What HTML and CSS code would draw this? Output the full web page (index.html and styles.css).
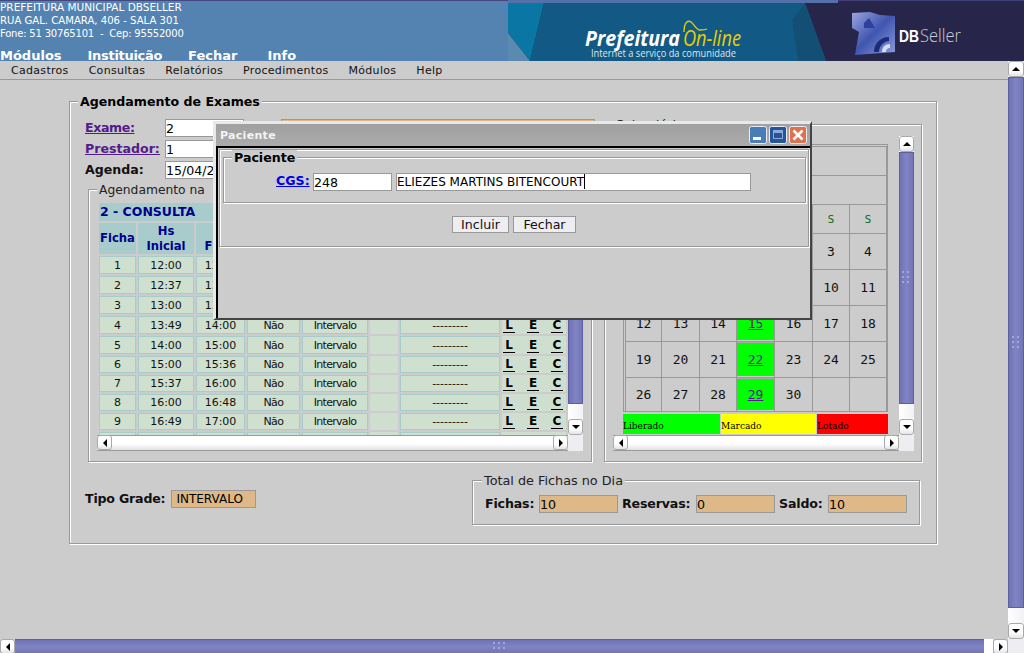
FILE: index.html
```html
<!DOCTYPE html>
<html lang="pt-BR">
<head>
<meta charset="utf-8">
<title>Agendamento de Exames</title>
<link rel="stylesheet" href="styles.css">
</head>
<body>
<div class="app">
  <header class="top">
    <div class="inst">
      <div class="inst-lines">
        <div class="l1">PREFEITURA MUNICIPAL DBSELLER</div>
        <div class="l2">RUA GAL. CAMARA, 406 - SALA 301</div>
        <div class="l3">Fone: 51 30765101 &nbsp;- &nbsp;Cep: 95552000</div>
      </div>
      <nav class="topnav"><span>Módulos</span><span class="n-inst">Instituição</span><span>Fechar</span><span class="n-info">Info</span></nav>
    </div>
    <svg class="banner" width="516" height="61" viewBox="0 0 516 61">
      <defs>
        <linearGradient id="cube" x1="0" y1="0" x2="1" y2="1">
          <stop offset="0" stop-color="#9aa6df"/><stop offset=".5" stop-color="#3f56b0"/><stop offset="1" stop-color="#8c9bd8"/>
        </linearGradient>
      </defs>
      <rect width="516" height="61" fill="#27264a"/>
      <path d="M0 3H36L22 61H22L0 33Z" fill="#0a76a4"/>
      <path d="M36 3H297L318 61H22Z" fill="#125a85"/>
      <path d="M284 20L297 3L318 61H290Z" fill="#134f74"/>
      <path d="M0 33L22 61H0Z" fill="#5a8ab0"/>
      <rect width="330" height="3" fill="#5470a8"/>
      <rect x="330" width="186" height="1" fill="#3f3f78"/>
      <text class="b-pref" x="77" y="46" textLength="95" lengthAdjust="spacingAndGlyphs">Prefeitura</text>
      <text class="b-on" x="175" y="46" textLength="58" lengthAdjust="spacingAndGlyphs">On-line</text>
      <path d="M176 32C176 22 180 20 183 22C187 25 188 30 192 30C195 30 197 30 199 29" fill="none" stroke="#e8cf00" stroke-width="1.3"/>
      <text class="b-sub" x="83" y="57" textLength="145" lengthAdjust="spacingAndGlyphs">Internet a serviço da comunidade</text>
      <path d="M344 13L362 12L372 15L387 16L387 52L347 55L351 32L344 28Z" fill="url(#cube)"/>
      <path d="M356 23L361 18L367 28L356 28Z" fill="#2e3f9c"/>
      <path d="M366 52C366 44 372 37 381 37L381 41C376 41 371 46 371 52Z" fill="#1c2c7c"/>
      <path d="M374 52C374 47 377 44 382 44L382 48C379 48 378 50 378 52Z" fill="#d5dcf2"/>
      <text class="b-db" x="391" y="42" textLength="20" lengthAdjust="spacingAndGlyphs">DB</text>
      <text class="b-seller" x="412" y="42" textLength="41" lengthAdjust="spacingAndGlyphs">Seller</text>
    </svg>
  </header>

  <div class="workspace">
    <nav class="menubar"><span>Cadastros</span><span>Consultas</span><span>Relatórios</span><span>Procedimentos</span><span>Módulos</span><span>Help</span></nav>

    <section class="group main-group">
      <div class="legend legend-strong">Agendamento de Exames</div>
      <div class="main-top">
        <div class="left-col">
          <div class="form-row"><a class="lbl lbl-link l-exame" href="#">Exame:</a><div class="field f-code">2</div><div class="field f-desc orange"></div></div>
          <div class="form-row"><a class="lbl lbl-link" href="#">Prestador:</a><div class="field f-code">1</div></div>
          <div class="form-row"><span class="lbl">Agenda:</span><div class="field f-code">15/04/2009</div></div>

          <section class="group slots-group">
            <div class="legend legend-tight">Agendamento na &nbsp;Data</div>
            <div class="scrollpanel slots-panel">
              <div class="viewport">
                <table class="slots">
                  <colgroup><col class="c1"><col class="c2"><col class="c3"><col class="c4"><col class="c5"><col class="c6"><col class="c7"><col class="c8"></colgroup>
                  <tr class="h-title"><th colspan="8">2 - CONSULTA</th></tr>
                  <tr class="h-cols"><th>Ficha</th><th>Hs<br>Inicial</th><th>Hs<br>Final</th><th></th><th></th><th></th><th></th><th></th></tr>
                  <tr class="tall"><td>1</td><td>12:00</td><td>12:36</td><td>Não</td><td>Intervalo</td><td class="plain"></td><td>---------</td><td class="plain"><div class="acts"><a>L</a><a>E</a><a>C</a></div></td></tr>
                  <tr class="tall"><td>2</td><td>12:37</td><td>13:00</td><td>Não</td><td>Intervalo</td><td class="plain"></td><td>---------</td><td class="plain"><div class="acts"><a>L</a><a>E</a><a>C</a></div></td></tr>
                  <tr class="tall"><td>3</td><td>13:00</td><td>13:48</td><td>Não</td><td>Intervalo</td><td class="plain"></td><td>---------</td><td class="plain"><div class="acts"><a>L</a><a>E</a><a>C</a></div></td></tr>
                  <tr class="tall"><td>4</td><td>13:49</td><td>14:00</td><td>Não</td><td>Intervalo</td><td class="plain"></td><td>---------</td><td class="plain"><div class="acts"><a>L</a><a>E</a><a>C</a></div></td></tr>
                  <tr class="tall"><td>5</td><td>14:00</td><td>15:00</td><td>Não</td><td>Intervalo</td><td class="plain"></td><td>---------</td><td class="plain"><div class="acts"><a>L</a><a>E</a><a>C</a></div></td></tr>
                  <tr><td>6</td><td>15:00</td><td>15:36</td><td>Não</td><td>Intervalo</td><td class="plain"></td><td>---------</td><td class="plain"><div class="acts"><a>L</a><a>E</a><a>C</a></div></td></tr>
                  <tr><td>7</td><td>15:37</td><td>16:00</td><td>Não</td><td>Intervalo</td><td class="plain"></td><td>---------</td><td class="plain"><div class="acts"><a>L</a><a>E</a><a>C</a></div></td></tr>
                  <tr><td>8</td><td>16:00</td><td>16:48</td><td>Não</td><td>Intervalo</td><td class="plain"></td><td>---------</td><td class="plain"><div class="acts"><a>L</a><a>E</a><a>C</a></div></td></tr>
                  <tr><td>9</td><td>16:49</td><td>17:00</td><td>Não</td><td>Intervalo</td><td class="plain"></td><td>---------</td><td class="plain"><div class="acts"><a>L</a><a>E</a><a>C</a></div></td></tr>
                  <tr><td></td><td></td><td></td><td></td><td></td><td class="plain"></td><td></td><td class="plain"></td></tr>
                </table>
              </div>
              <div class="vbar"><div class="sbtn up"></div><div class="thumb"></div><div class="track"></div><div class="sbtn down"></div></div>
              <div class="hbar"><div class="sbtn left"></div><div class="htrack"></div><div class="sbtn right"></div></div>
              <div class="corner"></div>
            </div>
          </section>
        </div>

        <section class="group cal-group">
          <div class="legend">Calendário</div>
          <div class="scrollpanel cal-panel">
            <div class="viewport cal-view">
              <div class="cal-frame">
                <table class="cal">
                  <colgroup><col class="d1"><col class="d2"><col class="d3"><col class="d4"><col class="d5"><col class="d6"><col class="d7"></colgroup>
                  <tr class="r-a"><td colspan="7"></td></tr>
                  <tr class="r-b"><td colspan="7"></td></tr>
                  <tr class="r-b wk"><td>D</td><td>S</td><td>T</td><td>Q</td><td>Q</td><td>S</td><td>S</td></tr>
                  <tr class="r-w"><td></td><td></td><td></td><td class="on"><a href="#">1</a></td><td>2</td><td>3</td><td>4</td></tr>
                  <tr class="r-w"><td>5</td><td>6</td><td>7</td><td class="on"><a href="#">8</a></td><td>9</td><td>10</td><td>11</td></tr>
                  <tr class="r-w"><td>12</td><td>13</td><td>14</td><td class="on"><a href="#">15</a></td><td>16</td><td>17</td><td>18</td></tr>
                  <tr class="r-w"><td>19</td><td>20</td><td>21</td><td class="on"><a href="#">22</a></td><td>23</td><td>24</td><td>25</td></tr>
                  <tr class="r-l"><td>26</td><td>27</td><td>28</td><td class="on"><a href="#">29</a></td><td>30</td><td></td><td></td></tr>
                </table>
              </div>
              <div class="cal-key"><span class="k-lib">Liberado</span><span class="k-mar">Marcado</span><span class="k-lot">Lotado</span></div>
            </div>
            <div class="vbar"><div class="sbtn up"></div><div class="thumb"><i class="grip"></i></div><div class="track"></div><div class="sbtn down"></div></div>
            <div class="hbar"><div class="sbtn left"></div><div class="htrack"></div><div class="sbtn right"></div></div>
            <div class="corner"></div>
          </div>
        </section>
      </div>

      <div class="main-bottom">
        <div class="tipo"><span class="lbl">Tipo Grade:</span><div class="field orange f-tipo">INTERVALO</div></div>
        <section class="group total-group">
          <div class="legend">Total de Fichas no Dia</div>
          <div class="totals">
            <span class="lbl">Fichas:</span><div class="field orange f-total">10</div>
            <span class="lbl">Reservas:</span><div class="field orange f-total">0</div>
            <span class="lbl">Saldo:</span><div class="field orange f-total">10</div>
          </div>
        </section>
      </div>
    </section>
  </div>

  <div class="vbar page-v"><div class="sbtn up"></div><div class="thumb"><i class="grip"></i></div><div class="track"></div><div class="sbtn down"></div></div>
  <div class="page-h"><div class="sbtn left"></div><div class="hthumb"><i class="grip grip-h"></i></div><div class="htrack"></div><div class="sbtn right"></div></div>
  <div class="page-corner"></div>
</div>

<div class="dialog">
  <div class="titlebar">
    <span class="title">Paciente</span>
    <div class="wbtns">
      <svg class="wbtn" viewBox="0 0 18 18"><rect x=".5" y=".5" width="17" height="17" rx="2" fill="#4a7cb8" stroke="#e8edf5"/><rect x="4" y="11" width="8" height="3" fill="#fff"/></svg>
      <svg class="wbtn" viewBox="0 0 18 18"><rect x=".5" y=".5" width="17" height="17" rx="2" fill="#24559c" stroke="#e8edf5"/><rect x="4.5" y="4.5" width="9" height="8" fill="none" stroke="#8fa9d4"/><rect x="4" y="4" width="10" height="3" fill="#8fa9d4"/></svg>
      <svg class="wbtn" viewBox="0 0 18 18"><rect x=".5" y=".5" width="17" height="17" rx="2" fill="#e0704e" stroke="#e8edf5"/><path d="M4.5 4.5L13.5 13.5M13.5 4.5L4.5 13.5" stroke="#fff" stroke-width="2.6"/></svg>
    </div>
  </div>
  <div class="dlg-body">
    <section class="group dlg-outer">
      <section class="group dlg-inner">
        <div class="legend legend-strong">Paciente</div>
        <div class="dlg-row">
          <a class="cgs" href="#">CGS:</a>
          <div class="field f-cgs">248</div>
          <div class="field f-name">ELIEZES MARTINS BITENCOURT<i class="caret"></i></div>
        </div>
      </section>
      <div class="dlg-actions"><button class="btn b-inc" type="button">Incluir</button><button class="btn b-fec" type="button">Fechar</button></div>
    </section>
  </div>
</div>
</body>
</html>
```
FILE: styles.css
```css
* { box-sizing: border-box; }
html, body { margin: 0; height: 100%; overflow: hidden; }
body { background: #ccc; font-family: "DejaVu Sans", sans-serif; font-size: 13px; color: #000; }
a { color: inherit; }

.app {
  display: grid;
  width: 1024px;
  height: 653px;
  grid-template-columns: 1008px 16px;
  grid-template-rows: 61px 578px 14px;
}

/* header */
.top { grid-column: 1 / 3; display: flex; height: 61px; overflow: hidden; background: #5583b1; }
.inst { width: 508px; border-top: 1px solid #45457f; color: #fff; }
.inst-lines { line-height: 13px; height: 47px; white-space: nowrap; }
.l1 { font-size: 10.5px; }
.l2 { font-size: 10.1px; }
.l3 { font-size: 10px; letter-spacing: -.2px; }
.topnav { display: flex; gap: 26px; font-size: 13px; font-weight: bold; line-height: 15px; }
.n-inst { letter-spacing: -.3px; }
.n-info { margin-left: 4px; }
.banner { display: block; flex: none; }
.b-pref { font: italic bold 21px "Open Sans", sans-serif; fill: #fff; }
.b-on { font: italic 400 21px "Open Sans", sans-serif; fill: #e8cf00; }
.b-sub { font: 10px "Open Sans", sans-serif; fill: #dde6ee; }
.b-db { font: bold 17px "Liberation Sans", sans-serif; fill: #fff; }
.b-seller { font: 300 18px "Open Sans", sans-serif; fill: #c9cdd8; }

/* menu */
.workspace { overflow: hidden; }
.menubar { display: flex; height: 19px; padding-left: 1px; border-bottom: 1px solid #999; font-size: 11px; line-height: 19px; letter-spacing: .3px; color: #111; }
.menubar span { padding: 0 10px; }

/* groups */
.group { position: relative; border: 1px solid #999; box-shadow: 1px 1px 0 #fff, inset 1px 1px 0 #fff; }
.legend { position: absolute; left: 8px; top: -8px; padding: 0 2px; background: #ccc; font-size: 12.8px; line-height: 16px; color: #222; white-space: nowrap; }
.legend-strong { font-size: 12.6px; font-weight: bold; color: #000; }
.legend-tight { font-size: 12.3px; }

.main-group { width: 868px; height: 443px; margin: 21px 0 0 69px; padding: 17px 0 0 15px; }
.main-top { display: grid; grid-template-columns: 510px 318px; column-gap: 9px; }
.form-row { display: flex; height: 21px; }
.lbl { font-weight: bold; font-size: 12.6px; line-height: 17px; white-space: nowrap; color: #111; }
.form-row .lbl { width: 80px; }
.lbl-link { color: #551a8b; text-decoration: underline; }
.l-exame { letter-spacing: -.4px; }

.field { height: 18px; border: 1px solid #999; background: #fff; font-size: 12.6px; line-height: 17px; padding-left: 0; white-space: nowrap; overflow: hidden; }
.orange { background: #deb887; }
.f-code { width: 79px; }
.f-desc { width: 314px; margin-left: 37px; }

/* slots */
.slots-group { width: 504px; height: 273px; margin: 7px 0 0 3px; padding: 10px 0 0 8px; }
.scrollpanel { display: grid; }
.slots-panel { width: 486px; height: 251px; grid-template-columns: 471px 15px; grid-template-rows: 235px 16px; }
.viewport { overflow: hidden; }
.slots { table-layout: fixed; width: 471px; margin-top: 1px; border-collapse: separate; border-spacing: 2px; font-size: 11px; }
.c1 { width: 37px; } .c2 { width: 56px; } .c3 { width: 49px; } .c4 { width: 53px; }
.c5 { width: 66px; } .c6 { width: 28px; } .c7 { width: 100px; } .c8 { width: 64px; }
.slots th { background: #a8cccc; color: #00008b; font-size: 11.6px; font-weight: bold; line-height: 15px; padding: 0; }
.h-title th { height: 18px; text-align: left; padding: 0 0 1px 1px; font-size: 12.5px; }
.h-cols th { height: 31px; }
.slots td { height: 17px; padding: 1px 0 0; background: #cfe0cf; border: 1px solid #a8cccc; text-align: center; color: #111; line-height: 14px; }
.slots tr.tall td { height: 18px; }
.slots td.plain { padding: 0; border: 0; background: #cfdfcf; }
.slots td:nth-child(4) { letter-spacing: -.5px; }
.slots td:nth-child(5) { letter-spacing: -.7px; }
.acts { display: flex; gap: 12px; padding-left: 1px; }
.acts a { display: block; width: 12px; height: 15px; border-bottom: 1px solid #000; font-size: 12px; line-height: 14px; font-weight: bold; color: #000; }

/* scrollbars */
.vbar { display: flex; flex-direction: column; background: linear-gradient(90deg, #fff, #f2f2f5); }
.thumb { flex: 1; display: flex; align-items: center; justify-content: center; background: linear-gradient(90deg, #6f73b5, #8084c4 50%, #7276b6); border: 1px solid #5d609f; }
.track { height: 15px; flex: none; }
.sbtn { position: relative; flex: none; width: 15px; height: 16px; background: linear-gradient(#fff, #fff 60%, #e4e4e8); border: 1px solid #aaa; border-radius: 3px; }
.sbtn::after { content: ""; position: absolute; left: 50%; top: 50%; width: 0; height: 0; border: 4px solid transparent; transform: translate(-50%, -50%); }
.up::after { border-top: 0; border-bottom-color: #000; }
.down::after { border-bottom: 0; border-top-color: #000; }
.left::after { border-left: 0; border-right-color: #000; }
.right::after { border-right: 0; border-left-color: #000; }
.hbar { display: flex; background: linear-gradient(#fff, #fff 55%, #e2e2e6); border-top: 1px solid #999; border-bottom: 1px solid #999; }
.hbar .htrack { flex: 1; }
.hbar .sbtn { height: 15px; margin-top: -1px; }
.corner { background: #eeeef2; }
.grip { display: block; width: 9px; height: 14px; background: conic-gradient(at 2px 2px, transparent 75%, #a3a6dc 0) 0 0 / 5px 5px; }
.grip-h { width: 14px; height: 9px; }

/* calendar */
.cal-group { width: 318px; height: 338px; margin-top: 5px; padding: 11px 0 0 8px; }
.cal-panel { width: 301px; height: 315px; grid-template-columns: 286px 15px; grid-template-rows: 299px 16px; }
.cal-view { padding: 8px 0 0 10px; }
.cal-frame { width: 265px; height: 268px; border: 1px solid #999; padding: 1px; }
.cal { table-layout: fixed; width: 261px; border-collapse: collapse; font-family: "DejaVu Sans Mono", monospace; font-size: 13px; text-align: center; color: #111; }
.cal td { padding: 0; border: 1px solid #999; }
.d1 { width: 36px; } .d2 { width: 38px; } .d3 { width: 37px; } .d4 { width: 38px; } .d5 { width: 38px; } .d6 { width: 37px; } .d7 { width: 37px; }
.r-a { height: 29px; } .r-b { height: 29px; } .r-w { height: 36px; } .r-l { height: 34px; }
.wk td { color: #0a6a14; font-size: 10px; font-family: "DejaVu Sans", sans-serif; }
.cal .on { background: #0f0; background-clip: padding-box; color: #551a8b; box-shadow: inset 0 1px 0 #aaa, inset 0 -1px 0 #ccc; }
.cal-key { display: flex; gap: 1px; width: 265px; height: 20px; margin-top: 2px; font: 9px/24px "DejaVu Serif", serif; color: #000; }
.cal-key span { overflow: hidden; white-space: nowrap; padding-left: 0; }
.k-lib { width: 97px; background: #0f0; }
.k-mar { width: 95px; background: #ff0; }
.k-lot { width: 71px; background: #f00; }

/* bottom */
.main-bottom { display: flex; justify-content: space-between; width: 835px; margin-top: 18px; }
.tipo { display: flex; margin-top: 10px; gap: 6px; }
.tipo .lbl { letter-spacing: -.2px; }
.f-tipo { width: 85px; padding-left: 4px; font-size: 12px; }
.total-group { width: 448px; height: 45px; padding: 14px 0 0 12px; }
.total-group .legend { left: 9px; }
.totals { display: grid; grid-template-columns: 54px 83px 74px 83px 49px 79px; }
.totals .lbl { letter-spacing: -.15px; }
.f-total { width: 79px; }

/* page scrollbars */
.page-v .sbtn { width: 16px; }
.page-v { grid-row: 2; grid-column: 2; margin-top: 0; }
.page-h { grid-row: 3; grid-column: 1; display: flex; width: 1008px; }
.page-h .sbtn { height: 15px; }
.page-h .hthumb { width: 969px; display: flex; flex-direction: column; align-items: center; justify-content: center; background: linear-gradient(#6f73b5, #8084c4 50%, #7276b6); border-top: 1px solid #5d609f; }
.page-h .htrack { flex: 1; background: #fff; }
.page-corner { grid-row: 3; grid-column: 2; background: #eeeef2; }

/* dialog */
.dialog { position: absolute; left: 213px; top: 121px; width: 599px; height: 199px; display: flex; flex-direction: column; background: #ccc; border-left: 3px solid #e8e8e8; border-top: 3px solid #e8e8e8; border-right: 2px solid #444; border-bottom: 2px solid #444; }
.titlebar { display: flex; align-items: center; justify-content: space-between; height: 22px; padding: 0 3px 0 4px; background: linear-gradient(#a0a0a0, #ababab); flex: none; }
.title { color: #f4f4f4; font-size: 11px; font-weight: bold; letter-spacing: .3px; }
.wbtns { display: flex; gap: 2px; }
.wbtn { display: block; width: 18px; height: 18px; }
.dlg-body { flex: 1; border-top: 2px solid #000; border-left: 2px solid #000; padding: 1px 1px 0 1px; }
.dlg-outer { height: 98px; padding: 7px 0 0 3px; }
.dlg-inner { width: 583px; height: 46px; padding: 15px 0 0 52px; }
.dlg-row { display: flex; }
.cgs { width: 37px; font-size: 12.6px; font-weight: bold; color: #00e; text-decoration: underline; line-height: 16px; }
.f-cgs { width: 79px; }
.f-name { position: relative; width: 355px; margin-left: 4px; overflow: hidden; font-size: 12px; }
.caret { display: inline-block; width: 1px; height: 15px; margin-left: 0; background: #000; vertical-align: -3px; }
.dlg-actions { display: flex; justify-content: flex-start; gap: 4px; margin: 13px 0 0 229px; }
.btn { height: 17px; padding: 0; background: #eeeef2; border: 1px solid #999; font: 12.6px/14px "DejaVu Sans", sans-serif; color: #111; }
.b-inc { width: 57px; } .b-fec { width: 63px; }
```
